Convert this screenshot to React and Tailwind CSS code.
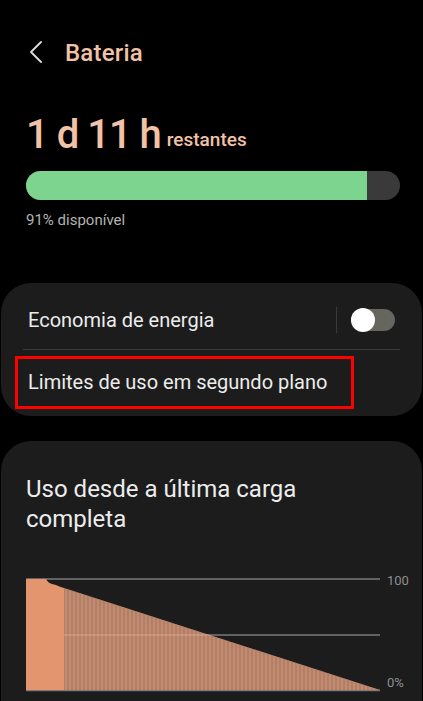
import React from "react";

function Chart() {
  const stripes = [];
  for (let i = 0; i < 80; i++) stripes.push(38 + i * 4);
  return (
    <div className="flex items-start">
      <svg width="356" height="114" viewBox="0 0 356 114" className="block shrink-0">
        <line x1="0" y1="1" x2="354" y2="1" stroke="#7a7a7a" strokeWidth="1.5" />
        <line x1="0" y1="57" x2="354" y2="57" stroke="#7a7a7a" strokeWidth="1.5" />
        <line x1="0" y1="112.5" x2="354" y2="112.5" stroke="#7a7a7a" strokeWidth="1.5" />
        <defs>
          <clipPath id="tri">
            <path d="M38 10 L354 112 L38 112 Z" />
          </clipPath>
        </defs>
        <path d="M38 10 L354 112 L38 112 Z" fill="#c08b71" />
        <g clipPath="url(#tri)">
          {stripes.map((x, i) => (
            <line key={i} x1={x} y1="0" x2={x} y2="114" stroke="#a97760" strokeWidth="1.3" />
          ))}
          <line x1="38" y1="57" x2="354" y2="57" stroke="#d8a488" strokeWidth="1" />
        </g>
        <path d="M0 1 L20 1 Q22 5 26 6 L30 7 Q34 9 38 10 L38 112 L0 112 Z" fill="#e3966e" />
      </svg>
      <div className="flex flex-col justify-between h-[122px] -mt-[7px] ml-[5px] text-[13px] text-[#8e8e8e]">
        <span>100</span>
        <span>0%</span>
      </div>
    </div>
  );
}

export default function App() {
  return (
    <div
      className="w-[423px] h-[701px] bg-black overflow-hidden"
      style={{ fontFamily: "Roboto, 'Noto Sans', sans-serif" }}
    >
      <header className="flex items-center h-[105px] pt-[1px] px-[26px]">
        <svg width="14" height="22" viewBox="0 0 14 22" className="ml-[3px] mt-[-2px]">
          <path d="M12 1 L2 11 L12 21" fill="none" stroke="#dcdcdc" strokeWidth="1.8" strokeLinecap="round" strokeLinejoin="round" />
        </svg>
        <h1 className="ml-[22px] text-[24px] font-medium text-[#f2c2a6] tracking-[0.2px]">Bateria</h1>
      </header>

      <section className="px-[26px] pt-[6px]">
        <div className="flex items-end text-[#f2c2a6] font-medium">
          <span className="text-[40px] leading-[48px] tracking-[-1px]">1 d 11 h</span>
          <span className="text-[19px] ml-[6px] mb-[5px]">restantes</span>
        </div>
        <div className="mt-[12px] h-[29px] w-[374px] rounded-full bg-[#3a3a3a] overflow-hidden">
          <div className="h-full w-[341px] bg-[#7dd48f]" />
        </div>
        <p className="mt-[9px] text-[15px] text-[#b3b3b3]">91% disponível</p>
      </section>

      <div className="mt-[51px] mx-[1px] rounded-[30px] bg-[#1c1c1c] pt-[8px] pb-[7px]">
        <div className="flex items-center h-[58px] pl-[27px] pr-[27px]">
          <span className="flex-1 text-[20px] text-[#ececec]">Economia de energia</span>
          <div className="w-[1px] h-[26px] bg-[#3a3a3a] mr-[14px]" />
          <div className="relative w-[44px] h-[22px] rounded-full bg-[#66665f]">
            <div className="absolute left-0 top-[-1px] w-[24px] h-[24px] rounded-full bg-white" />
          </div>
        </div>
        <div className="mx-[22px] h-[1px] bg-[#3a3a3a]" />
        <div className="ml-[14px] mt-[6px] w-[339px] h-[53px] border-[3px] border-[#ff0000] flex items-center pl-[10px]">
          <span className="text-[20px] text-[#ececec]">Limites de uso em segundo plano</span>
        </div>
      </div>

      <div className="mt-[25px] mx-[1px] rounded-t-[30px] bg-[#1c1c1c] pt-[33px] pl-[25px] pr-[8px] h-[300px]">
        <h2 className="text-[24px] leading-[30px] text-[#ececec] w-[330px]">
          Uso desde a última carga completa
        </h2>
        <div className="mt-[44px]">
          <Chart />
        </div>
      </div>
    </div>
  );
}
